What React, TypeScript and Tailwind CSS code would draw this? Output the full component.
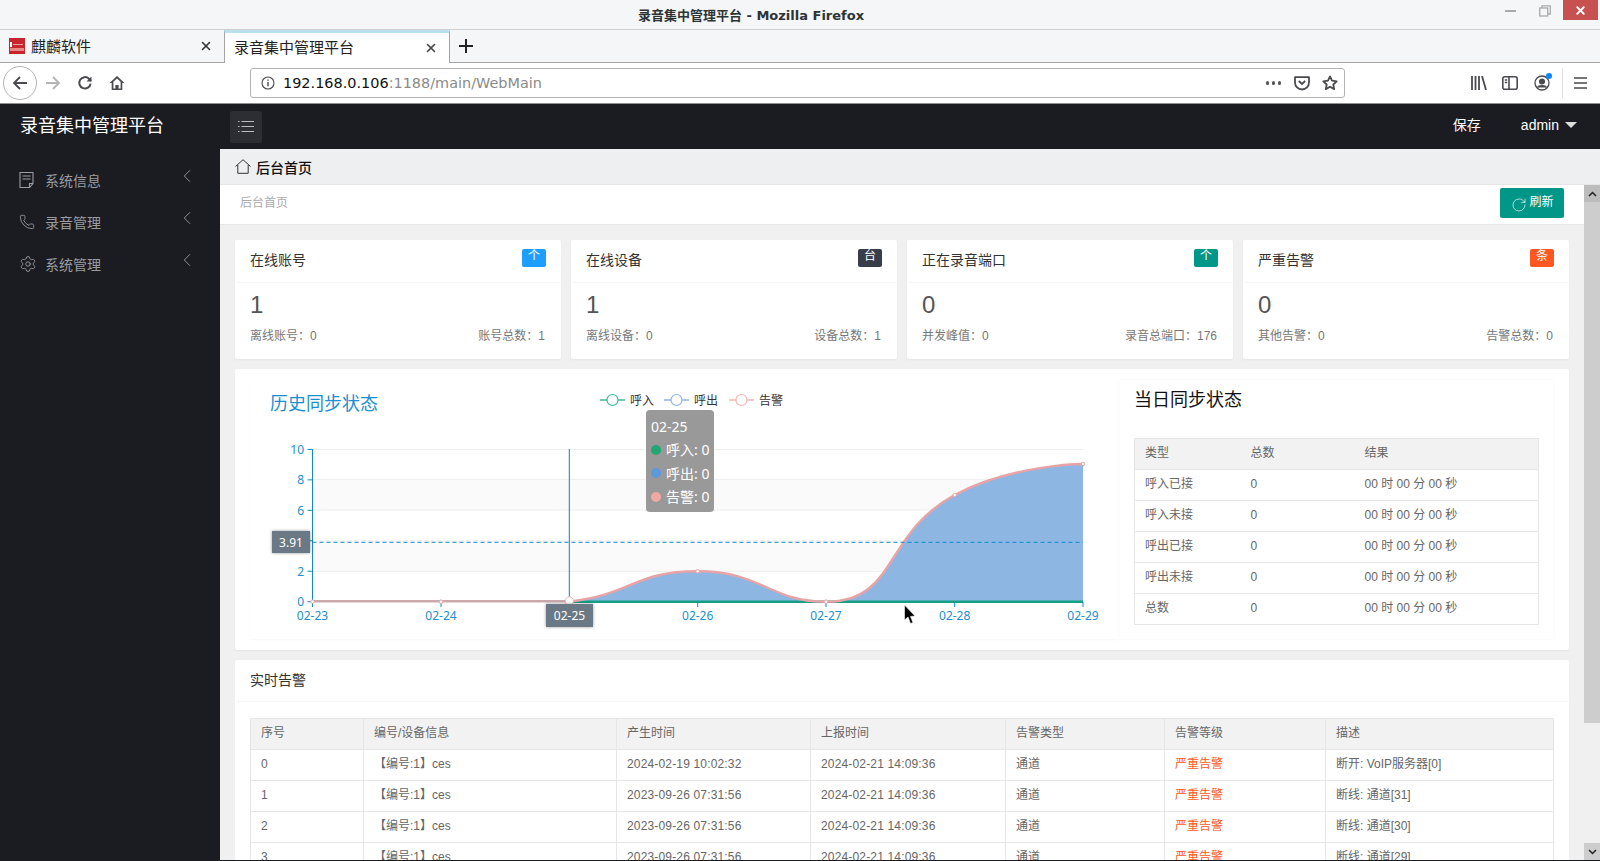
import { ChevronLeft, Phone, RotateCw, Settings, X } from 'lucide-react';

const SANS = "[font-family:'Liberation_Sans','Noto_Sans_CJK_SC',sans-serif]";

const STATS = [
  { title: '在线账号', badge: '个', color: 'bg-[#1e9fff]', value: '1', left: '离线账号：0', right: '账号总数：1' },
  { title: '在线设备', badge: '台', color: 'bg-[#393d49]', value: '1', left: '离线设备：0', right: '设备总数：1' },
  { title: '正在录音端口', badge: '个', color: 'bg-[#009688]', value: '0', left: '并发峰值：0', right: '录音总端口：176' },
  { title: '严重告警', badge: '条', color: 'bg-[#ff5722]', value: '0', left: '其他告警：0', right: '告警总数：0' },
];

const DAILY = ['呼入已接', '呼入未接', '呼出已接', '呼出未接', '总数'];

const ALARMS = [
  { id: '0', made: '2024-02-19 10:02:32', desc: '断开: VoIP服务器[0]' },
  { id: '1', made: '2023-09-26 07:31:56', desc: '断线: 通道[31]' },
  { id: '2', made: '2023-09-26 07:31:56', desc: '断线: 通道[30]' },
  { id: '3', made: '2023-09-26 07:31:56', desc: '断线: 通道[29]' },
];

const X_POINTS = [312.5, 441, 569.3, 697.7, 826, 954.7, 1083];
const Y_POINTS = [601.7, 601.7, 601.7, 571.3, 601.7, 495, 464];
const CURVE =
  'M569.3 601.7 C634 594 634 571.3 697.7 571.3 C762 571.3 769.6 601.7 826 601.7 C897.7 601.7 882.7 533.6 954.7 495 C1011 464.6 1083 464 1083 464';

function Legend({ x, color, label }: { x: number; color: string; label: string }) {
  return (
    <g>
      <line x1={x} x2={x + 25} y1={400} y2={400} stroke={color} strokeWidth={1.5} />
      <circle cx={x + 12.5} cy={400} r={5.5} fill="#fff" stroke={color} strokeWidth={1.2} />
      <text x={x + 30} y={404.5} fontSize={12} fill="#333">{label}</text>
    </g>
  );
}

function HistoryChart() {
  return (
    <svg viewBox="250 380 869 259" className="absolute inset-0 h-[259px] w-[869px] [font-family:'Noto_Sans','Noto_Sans_CJK_SC',sans-serif]">
      <Legend x={600} color="#3dbb90" label="呼入" />
      <Legend x={664} color="#8cb5e8" label="呼出" />
      <Legend x={729} color="#f5b5b5" label="告警" />

      {/* split areas */}
      <rect x={312.5} y={479.3} width={770.5} height={30.8} fill="#fafafa" />
      <rect x={312.5} y={540.9} width={770.5} height={30.4} fill="#fafafa" />
      {[449.5, 479.3, 510.1, 540.9, 571.3].map(y => (
        <line key={y} x1={312.5} x2={1083} y1={y} y2={y} stroke="#eee" />
      ))}

      {/* axes */}
      <line x1={312.5} x2={312.5} y1={449} y2={602} stroke="#0e8ace" />
      {[0, 2, 4, 6, 8, 10].map(v => {
        const y = 601.7 - v * 15.23;
        return (
          <g key={v}>
            <line x1={307.5} x2={312.5} y1={y} y2={y} stroke="#0e8ace" />
            {v !== 4 && (
              <text x={304} y={y + 4.5} fontSize={12} textAnchor="end" fill="#1a8fd1">{v}</text>
            )}
          </g>
        );
      })}

      <path d={`${CURVE} L1083 601.7 Z`} fill="#8db6e3" />
      <line x1={312.5} x2={569.3} y1={601.2} y2={601.2} stroke="#c9a9ae" strokeWidth={2.4} />
      <line x1={569.3} x2={1083} y1={601.7} y2={601.7} stroke="#14a085" strokeWidth={2.4} />
      <path d={CURVE} fill="none" stroke="#e7a3a6" strokeWidth={2.4} />

      {X_POINTS.map((x, i) => (
        <g key={x}>
          <line x1={x} x2={x} y1={602} y2={607} stroke="#0e8ace" />
          {i !== 2 && (
            <text x={x} y={620} fontSize={12} textAnchor="middle" fill="#1a8fd1">{`02-${23 + i}`}</text>
          )}
          {i !== 2 && <circle cx={x} cy={Y_POINTS[i]} r={1.8} fill="#fff" stroke="#e7a3a6" />}
        </g>
      ))}

      {/* axis pointers */}
      <line x1={312.5} x2={1083} y1={542.3} y2={542.3} stroke="#0e8ace" strokeDasharray="4 3" />
      <line x1={569.3} x2={569.3} y1={449} y2={602} stroke="#0e7fc0" />
      <circle cx={569.3} cy={601} r={4.2} fill="#fff" stroke="#eeb4b4" />

      {/* mouse cursor */}
      <path d="M904.5 605 L904.5 620 L908 617 L910.5 623.5 L913 622.5 L910.5 616.5 L915 616 Z" fill="#000" stroke="#fff" strokeWidth={0.6} />
    </svg>
  );
}

function Browser() {
  return (
    <div className="shrink-0 [font-family:'DejaVu_Sans','Noto_Sans_CJK_SC',sans-serif]">
      {/* title bar */}
      <div className="relative flex h-[30px] items-center justify-center border-b border-[#cfcfcf] bg-[#f5f6f7]">
        <span className="mr-[98px] mt-[2px] text-[13px] font-bold text-[#2e3436]">录音集中管理平台 - Mozilla Firefox</span>
        <div className="absolute top-0 right-[2px] flex items-start">
          <div className="mr-[23px] mt-[10px] h-[2px] w-[11px] bg-[#aaa]" />
          <svg width="12" height="12" viewBox="0 0 12 12" className="mr-[12px] mt-[5px]" fill="none" stroke="#aaa" strokeWidth="1.3">
            <rect x="0.7" y="3" width="8" height="8" />
            <path d="M3 3V0.8h8.300V9H9" />
          </svg>
          <div className="flex h-[20px] w-[35px] items-center justify-center bg-[#c75050]">
            <X size={13} color="#fff" strokeWidth={3.4} />
          </div>
        </div>
      </div>
      {/* tabs */}
      <div className="flex h-[33px] border-b border-[#a5a5a5] bg-[#f5f6f7] text-[#222]">
        <div className="flex w-[224px] items-center pl-[9px] pr-[11px]">
          <svg width="16" height="16" viewBox="0 0 16 16" className="mr-[6px] shrink-0">
            <rect width="16" height="16" fill="#c9252c" />
            <rect x="1" y="4" width="2" height="5" fill="#fff" />
            <rect x="4" y="6" width="10" height="1" fill="#e9a0a0" />
            <rect x="1" y="10" width="14" height="3" fill="#e88a8a" />
          </svg>
          <span className="mt-[2px] text-[15px]">麒麟软件</span>
          <X size={14} className="ml-auto" color="#333" strokeWidth={2.6} />
        </div>
        <div className="relative z-10 flex h-[33px] w-[226px] items-center border-x border-[#a5a5a5] border-t-[3px] border-t-[#b9e0ee] bg-white pl-[9px] pr-[11px]">
          <span className="text-[15px]">录音集中管理平台</span>
          <X size={14} className="ml-auto" color="#444" strokeWidth={2.6} />
        </div>
        <svg width="14" height="14" viewBox="0 0 14 14" className="ml-[9px] mt-[9px]" stroke="#222" strokeWidth="2">
          <path d="M7 0v14M0 7h14" />
        </svg>
      </div>
      {/* toolbar */}
      <div className="flex h-[41px] items-center border-b border-[#8f8f8f] bg-white">
        <div className="ml-[3px] flex h-[34px] w-[34px] items-center justify-center rounded-full border border-[#b5b5b5]">
          <svg width="16" height="16" viewBox="0 0 16 16" fill="none" stroke="#4a4a4f" strokeWidth="1.8">
            <path d="M15 8H2M8 2L2 8l6 6" />
          </svg>
        </div>
        <svg width="16" height="16" viewBox="0 0 16 16" fill="none" stroke="#b4b4b4" strokeWidth="1.8" className="ml-[8px]">
          <path d="M1 8h13M8 2l6 6-6 6" />
        </svg>
        <svg width="16" height="16" viewBox="0 0 16 16" fill="none" stroke="#4a4a4f" strokeWidth="2" className="ml-[16px]">
          <path d="M13.600 8.600A5.700 5.700 0 1 1 12 3.800L14 6" />
          <path d="M14.500 1.500V6.500H9.500z" fill="#4a4a4f" stroke="none" />
        </svg>
        <svg width="16" height="16" viewBox="0 0 16 16" className="ml-[16px]" fill="#4a4a4f">
          <path d="M8 1L0.500 8h2.200v7h10.600V8h2.200zM8 3.400l3.600 3.400v6.700H9.600V10H6.400v3.500H4.400V6.800z" />
        </svg>
        <div className="ml-[125px] flex h-[30px] w-[1095px] items-center rounded-[3px] border border-[#b3b3b3] pl-[10px] pr-[6px]">
          <svg width="14" height="14" viewBox="0 0 14 14" fill="none" stroke="#4a4a4f" strokeWidth="1.1">
            <circle cx="7" cy="7" r="6" />
            <path d="M7 6v4.200M7 3.600v1.200" strokeWidth="1.4" />
          </svg>
          <span className="ml-[8px] mt-[1px] text-[14.45px] text-[#111]">192.168.0.106<span className="text-[#8a8a8a]">:1188/main/WebMain</span></span>
          <div className="ml-auto flex items-center">
            <div className="mr-[13px] flex gap-[2.5px]">
              <div className="h-[3.5px] w-[3.5px] rounded-full bg-[#555]" />
              <div className="h-[3.5px] w-[3.5px] rounded-full bg-[#555]" />
              <div className="h-[3.5px] w-[3.5px] rounded-full bg-[#555]" />
            </div>
            <svg width="16" height="16" viewBox="0 0 16 16" fill="none" stroke="#4a4a4f" strokeWidth="1.8" className="mr-[12px]">
              <path d="M1 2.200h14v5.300a7 7 0 0 1-14 0z" strokeLinejoin="round" />
              <path d="M4.800 6l3.200 3 3.200-3" />
            </svg>
            <svg width="16" height="16" viewBox="0 0 16 16" fill="none" stroke="#4a4a4f" strokeWidth="1.8" strokeLinejoin="round">
              <path d="M8 1.400l2 4.300 4.700.6-3.400 3.200.9 4.600L8 11.800l-4.200 2.300.9-4.600L1.300 6.300 6 5.700z" />
            </svg>
          </div>
        </div>
        <svg width="16" height="14" viewBox="0 0 16 14" fill="none" stroke="#4a4a4f" strokeWidth="1.8" className="ml-[126px]">
          <path d="M1 0v14M4.500 0v14M8 0v14M11 0l4 14" />
        </svg>
        <svg width="16" height="14" viewBox="0 0 16 14" fill="none" stroke="#4a4a4f" strokeWidth="1.6" className="ml-[15px]">
          <rect x="0.8" y="0.8" width="14.4" height="12.4" rx="2" />
          <path d="M7 1v12M2.800 4h2.400M2.800 6.500h2.400" />
        </svg>
        <div className="relative ml-[16px] h-[16px] w-[16px]">
          <svg width="16" height="16" viewBox="0 0 16 16" fill="none" stroke="#4a4a4f" strokeWidth="1.3">
            <circle cx="8" cy="8" r="7" />
            <circle cx="8" cy="6.500" r="2.400" fill="#4a4a4f" />
            <path d="M3.500 12.500c1-2.400 8-2.400 9 0" fill="#4a4a4f" />
          </svg>
          <div className="absolute -right-[2px] -top-[2px] h-[6px] w-[6px] rounded-full bg-[#0a84ff]" />
        </div>
        <div className="ml-[12px] h-[30px] w-px bg-[#e0e0e0]" />
        <svg width="13" height="12" viewBox="0 0 13 12" stroke="#4a4a4f" strokeWidth="1.7" className="ml-[11px]">
          <path d="M0 1h13M0 6h13M0 11h13" />
        </svg>
      </div>
    </div>
  );
}

function Sidebar() {
  const items = [
    {
      label: '系统信息',
      icon: (
        <svg width="15" height="16" viewBox="0 0 15 16" fill="none" stroke="currentColor" strokeWidth="1.1">
          <path d="M1 .5h13v11l-3.500 4H1z" />
          <path d="M3.500 4h8M3.500 7h8M14 11.500h-3.500v3.500" />
        </svg>
      ),
    },
    { label: '录音管理', icon: <Phone size={16} strokeWidth={1.3} /> },
    { label: '系统管理', icon: <Settings size={18} strokeWidth={1.2} /> },
  ];
  return (
    <div className="flex w-[220px] shrink-0 flex-col bg-[#1b1c22]">
      <div className="ml-[20px] mt-[9px] text-[18px] leading-[26px] text-white">录音集中管理平台</div>
      <div className="mt-[26px] flex flex-col gap-[10px]">
        {items.map(item => (
          <div key={item.label} className="flex h-[32px] items-center pl-[19px] text-[#9a9da1]">
            <span className="mt-[-2px] w-[26px]">{item.icon}</span>
            <span className="text-[14px]">{item.label}</span>
            <ChevronLeft size={22} strokeWidth={1} className="ml-[75px] mt-[-10px]" />
          </div>
        ))}
      </div>
    </div>
  );
}

function StatCard({ stat }: { stat: (typeof STATS)[number] }) {
  return (
    <div className="rounded-[2px] bg-white shadow-[0_1px_2px_rgba(0,0,0,0.05)]">
      <div className="flex h-[43px] items-center justify-between border-b border-[#f6f6f6] pb-[1px] pl-[15px] pr-[15px]">
        <span className="text-[14px] text-[#333]">{stat.title}</span>
        <span className={`mb-[5px] h-[18px] w-[24px] rounded-[2px] text-center text-[12px] leading-[14px] text-white ${stat.color}`}>{stat.badge}</span>
      </div>
      <div className="px-[15px] pb-[14px] pt-[4px]">
        <div className="text-[24px] leading-[36px] text-[#555]">{stat.value}</div>
        <div className="mt-[4px] flex justify-between text-[12px] leading-[18px] text-[#777]">
          <span>{stat.left}</span>
          <span className="pr-[1px]">{stat.right}</span>
        </div>
      </div>
    </div>
  );
}

function DailyTable() {
  return (
    <table className="w-full table-fixed border-collapse border border-[#e6e6e6] text-[12px] text-[#666]">
      <thead>
        <tr className="h-[31px] border-b border-[#e6e6e6] bg-[#f2f2f2] text-left">
          <th className="w-[106px] pb-[2px] pl-[10px] font-normal">类型</th>
          <th className="w-[113px] pb-[2px] pl-[10px] font-normal">总数</th>
          <th className="pb-[2px] pl-[11px] font-normal">结果</th>
        </tr>
      </thead>
      <tbody>
        {DAILY.map(name => (
          <tr key={name} className="h-[31px] border-b border-[#e6e6e6]">
            <td className="pb-[2px] pl-[10px]">{name}</td>
            <td className="pb-[2px] pl-[10px]">0</td>
            <td className="pb-[2px] pl-[11px]">00 时 00 分 00 秒</td>
          </tr>
        ))}
      </tbody>
    </table>
  );
}

function AlarmTable() {
  const cell = 'border border-[#e6e6e6] pb-[2px] pl-[10px] text-left font-normal';
  return (
    <table className="w-full table-fixed border-collapse text-[12px] text-[#666]">
      <thead>
        <tr className="h-[31px] bg-[#f2f2f2]">
          <th className={`${cell} w-[113px]`}>序号</th>
          <th className={`${cell} w-[253px]`}>编号/设备信息</th>
          <th className={`${cell} w-[194px]`}>产生时间</th>
          <th className={`${cell} w-[195px]`}>上报时间</th>
          <th className={`${cell} w-[159px]`}>告警类型</th>
          <th className={`${cell} w-[161px]`}>告警等级</th>
          <th className={cell}>描述</th>
        </tr>
      </thead>
      <tbody>
        {ALARMS.map(row => (
          <tr key={row.id} className="h-[31px]">
            <td className={cell}>{row.id}</td>
            <td className={cell}>【编号:1】ces</td>
            <td className={`${cell} tracking-[0.16px]`}>{row.made}</td>
            <td className={`${cell} tracking-[0.16px]`}>2024-02-21 14:09:36</td>
            <td className={cell}>通道</td>
            <td className={`${cell} text-[#ff5722]`}>严重告警</td>
            <td className={cell}>{row.desc}</td>
          </tr>
        ))}
      </tbody>
    </table>
  );
}

export default function App() {
  return (
    <div className={`flex h-[861px] w-[1600px] flex-col overflow-hidden bg-white ${SANS}`}>
      <Browser />
      <div className="flex min-h-0 flex-1">
        <Sidebar />
        <div className="flex min-w-0 flex-1 flex-col">
          {/* top bar */}
          <div className="flex h-[45px] shrink-0 items-center bg-[#1b1c22] pl-[10px]">
            <div className="flex h-[32px] w-[32px] items-center justify-center rounded-[3px] bg-[#2d2e33]">
              <svg width="16" height="11" viewBox="0 0 16 11" stroke="#bbb" strokeWidth="1">
                <path d="M0 .5h1.500M3.500 .5H16M0 5.500h1.500M3.500 5.500H16M0 10.500h1.500M3.500 10.500H16" />
              </svg>
            </div>
            <span className="ml-auto mt-[-3px] text-[14px] text-white">保存</span>
            <span className="ml-[40px] mt-[-3px] text-[14px] text-white">admin</span>
            <span className="ml-[6px] mr-[23px] mt-[-4px] h-0 w-0 border-x-[6px] border-t-[6px] border-x-transparent border-t-[#ddd]" />
          </div>
          {/* page title */}
          <div className="flex h-[36px] shrink-0 items-center border-b border-[#e6e6e6] bg-[#eeeff1] pl-[15px] pt-[3px]">
            <svg width="16" height="15" viewBox="0 0 16 15" fill="none" stroke="#333" strokeWidth="1" className="mt-[-4px]">
              <path d="M.5 7.500L8 .7l7.500 6.800M2.800 6v8.300h10.400V6" />
            </svg>
            <span className="ml-[5px] text-[14px] font-medium text-[#111]">后台首页</span>
          </div>
          <div className="flex min-h-0 flex-1">
            <div className="min-w-0 flex-1 overflow-hidden bg-[#f0f0f0]">
              {/* breadcrumb */}
              <div className="flex h-[40px] items-start justify-between border-b border-[#e6e6e6] bg-white pl-[20px] pr-[20px]">
                <span className="mt-[9px] text-[12px] leading-[18px] text-[#aaa]">后台首页</span>
                <div className="mt-[3px] flex h-[30px] w-[64px] items-center justify-center rounded-[2px] bg-[#009688] pl-[1px] text-[12px] text-white">
                  <RotateCw size={16} strokeWidth={1} className="mb-[-3px] mr-[2px]" />
                  <span className="mt-[-2px]">刷新</span>
                </div>
              </div>
              <div className="flex flex-col gap-[10px] px-[15px] pt-[15px]">
                <div className="grid grid-cols-4 gap-[10px]">
                  {STATS.map(stat => (
                    <StatCard key={stat.title} stat={stat} />
                  ))}
                </div>
                {/* sync status */}
                <div className="flex rounded-[2px] bg-white px-[15px] pb-[11px] pt-[11px] shadow-[0_1px_2px_rgba(0,0,0,0.05)]">
                  <div className="relative h-[259px] w-[869px] shadow-[0_1px_2px_rgba(0,0,0,0.03)]">
                    <div className="pl-[20px] pt-[11px] text-[18px] leading-[27px] text-[#1a8fd1]">历史同步状态</div>
                    <HistoryChart />
                    {/* tooltip */}
                    <div className="absolute left-[396px] top-[30px] flex h-[102px] w-[68px] flex-col rounded-[4px] bg-[#999] pl-[5px] pt-[5px] text-[14px] leading-[23.3px] text-white [font-family:'Noto_Sans','Noto_Sans_CJK_SC',sans-serif]">
                      <span>02-25</span>
                      <span className="flex items-center"><i className="mr-[5px] h-[10px] w-[10px] rounded-full bg-[#1fa774]" />呼入: 0</span>
                      <span className="flex items-center"><i className="mr-[5px] h-[10px] w-[10px] rounded-full bg-[#5b98dc]" />呼出: 0</span>
                      <span className="flex items-center"><i className="mr-[5px] h-[10px] w-[10px] rounded-full bg-[#efa8a4]" />告警: 0</span>
                    </div>
                    <div className="absolute left-[22px] top-[151px] flex h-[22px] w-[38px] items-center justify-center bg-[#6a7985] pt-[1px] text-[12px] text-white shadow-[0_0_3px_rgba(0,0,0,0.4)] [font-family:'Noto_Sans',sans-serif]">3.91</div>
                    <div className="absolute left-[296px] top-[224px] flex h-[23px] w-[47px] items-center justify-center bg-[#6a7985] text-[12px] text-white shadow-[0_0_3px_rgba(0,0,0,0.4)] [font-family:'Noto_Sans',sans-serif]">02-25</div>
                  </div>
                  <div className="h-[259px] w-[435px] px-[15px] shadow-[0_0_2px_rgba(0,0,0,0.05)]">
                    <div className="mt-[7px] text-[18px] leading-[27px] text-[#111]">当日同步状态</div>
                    <div className="mt-[24px]">
                      <DailyTable />
                    </div>
                  </div>
                </div>
                {/* alarms */}
                <div className="rounded-[2px] bg-white pb-[15px]">
                  <div className="flex h-[42px] items-center border-b border-[#f6f6f6] pl-[15px] text-[14px] text-[#333]">实时告警</div>
                  <div className="px-[15px] pt-[16px]">
                    <AlarmTable />
                  </div>
                </div>
              </div>
            </div>
            {/* scrollbar */}
            <div className="flex w-[16px] shrink-0 flex-col bg-[#f0f0f0]">
              <div className="flex h-[17px] items-center justify-center bg-[#bcbcbc]">
                <svg width="9" height="6" viewBox="0 0 9 6" fill="none" stroke="#222" strokeWidth="1.5"><path d="M1 5l3.500-3.500L8 5" /></svg>
              </div>
              <div className="h-[521px] bg-[#cdcdcd]" />
              <div className="flex-1" />
              <div className="flex h-[17px] items-center justify-center bg-[#cdcdcd]">
                <svg width="9" height="6" viewBox="0 0 9 6" fill="none" stroke="#222" strokeWidth="1.5"><path d="M1 1l3.500 3.500L8 1" /></svg>
              </div>
            </div>
          </div>
        </div>
      </div>
      <div className="h-px shrink-0 bg-[#1b1c22]" />
    </div>
  );
}
